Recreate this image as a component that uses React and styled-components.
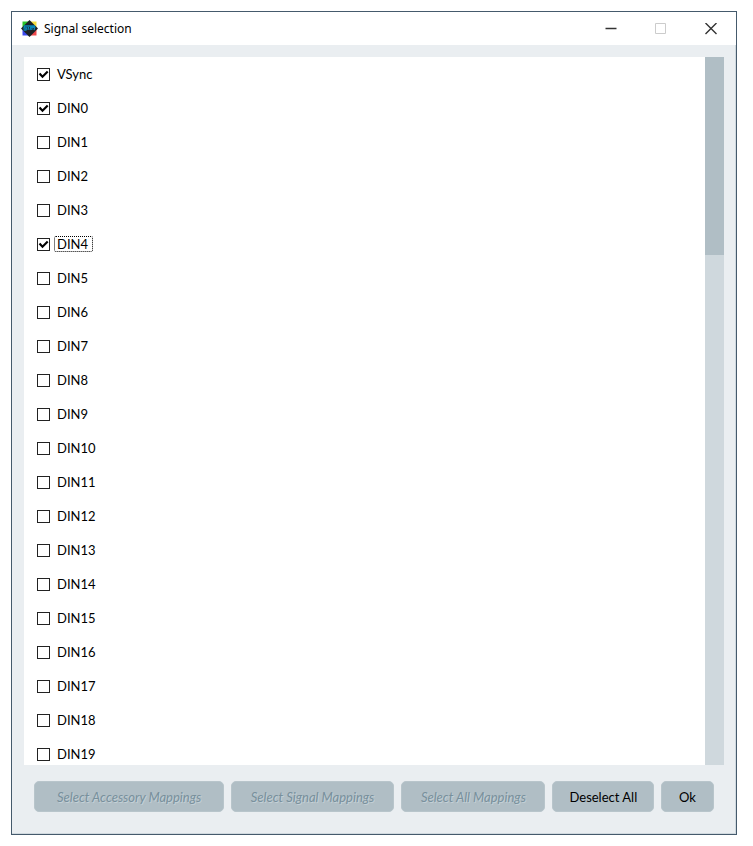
import React, { useState } from "react";
import styled, { createGlobalStyle } from "styled-components";

const GlobalStyle = createGlobalStyle`
    *, *::before, *::after {
        box-sizing: border-box;
    }

    body {
        margin: 0;
        background-color: #ffffff;
        font-family: Lato, "Liberation Sans", sans-serif;
        font-size: 13px;
        color: #000000;
    }
`;

const Desktop = styled.div`
    display: flex;
    height: 100vh;
    padding: 11px 16px 11px 11px;
`;

// Window frame
const Window = styled.div`
    flex: 1;
    min-width: 0;
    display: flex;
    flex-direction: column;
    border: 1px solid #455a6c;
    background-color: #eaeef1;
    box-shadow: inset -1px -1px 0 #d0d9df;
`;

const TitleBar = styled.header`
    display: flex;
    align-items: center;
    height: 33px;
    flex-shrink: 0;
    padding-left: 9px;
    background-color: #ffffff;
`;

const Title = styled.h1`
    flex: 1;
    margin: 0 0 0 6px;
    font-family: "Noto Sans", "Open Sans", sans-serif;
    font-size: 12px;
    font-weight: 400;
    line-height: 16px;
`;

const WindowButton = styled.button`
    display: flex;
    align-items: center;
    justify-content: center;
    width: 50px;
    height: 33px;
    padding: 0;
    border: none;
    background: none;
    color: ${(props) => (props.disabled ? "#cccccc" : "#333333")};
`;

// Signal list
const ListFrame = styled.main`
    flex: 1;
    min-height: 0;
    display: flex;
    margin: 12px 12px 0;
    background-color: #ffffff;
`;

const SignalList = styled.ul`
    flex: 1;
    margin: 0;
    padding: 0 0 0 13px;
    list-style: none;
    overflow-y: auto;
    scrollbar-width: none;
`;

const SignalRow = styled.li`
    display: flex;
    align-items: center;
    height: 34px;
`;

const SignalLabel = styled.label`
    display: flex;
    align-items: center;
    gap: 4px;
`;

const CheckBox = styled.input`
    appearance: none;
    width: 13px;
    height: 13px;
    margin: 0;
    border: 1px solid #222222;
    background: #ffffff;
    outline: none;

    &:checked {
        background: #ffffff
            url("data:image/svg+xml,%3Csvg xmlns='http://www.w3.org/2000/svg' viewBox='0 0 11 11'%3E%3Cpath d='M1.500 4.500l3 3.200L9.700 2.500' fill='none' stroke='black' stroke-width='2.200'/%3E%3C/svg%3E")
            center / 11px 11px no-repeat;
    }
`;

const SignalName = styled.span`
    padding: 0 4px 0 2px;
    border: 1px dotted ${(props) => (props.$focused ? "#000000" : "transparent")};
    border-radius: 2px;
    line-height: 14px;
`;

const ScrollTrack = styled.div`
    width: 19px;
    background-color: #cfd8dd;
`;

const ScrollThumb = styled.div`
    height: 28%;
    background-color: #b0bec5;
`;

// Bottom buttons
const ButtonBar = styled.footer`
    display: flex;
    justify-content: flex-end;
    gap: 7px;
    padding: 16px 22px 22px;
`;

const ActionButton = styled.button`
    min-width: 53px;
    height: 31px;
    padding: 0 ${(props) => props.$pad || 16}px;
    border: 1px solid #b8c5cb;
    border-radius: 5px;
    background-color: #b0bec5;
    font-family: inherit;
    font-size: 13px;
    white-space: nowrap;
    color: #000000;

    &:disabled {
        font-style: italic;
        color: #78909c;
        text-shadow: 1px 1px 0 #c4d0d6;
    }
`;

const AppIcon = () => (
    <svg width="17" height="17" viewBox="0 0 17 17" aria-hidden="true">
        <path d="M1.500 1.500h7v7h-7z" fill="#2bc42b" />
        <path d="M8.500 1.500h7v7h-7z" fill="#f7e040" />
        <path d="M1.500 8.500h7v7h-7z" fill="#3a48ee" />
        <path d="M8.500 8.500h7v7h-7z" fill="#f0484c" />
        <path d="M8.500 0L17 8.500 8.500 17 0 8.500z" fill="#1d2226" />
        <path
            d="M6 6H3.500L3 8h2.500L5 10H2.500M7.500 7L7 10M9 10l.6-2.700h1.600L10.700 10M11.500 7.300h2.300L13 10M5 6h9"
            fill="none"
            stroke="#0887b8"
            strokeWidth="1.300"
        />
    </svg>
);

const SIGNALS = ["VSync", ...Array.from({ length: 20 }, (_, i) => `DIN${i}`)];

const MAPPINGS = [
    { text: "Select Accessory Mappings", pad: 22 },
    { text: "Select Signal Mappings", pad: 19 },
    { text: "Select All Mappings", pad: 19 },
];

export default function App() {
    const [selected, setSelected] = useState(["VSync", "DIN0", "DIN4"]);
    const [focused, setFocused] = useState("DIN4");

    const toggleSignal = (name) => {
        setSelected((prev) => (prev.includes(name) ? prev.filter((s) => s !== name) : [...prev, name]));
    };

    return (
        <>
            <GlobalStyle />
            <Desktop>
                <Window>
                    <TitleBar>
                        <AppIcon />
                        <Title>Signal selection</Title>
                        <WindowButton aria-label="Minimize">
                            <svg width="12" height="12" viewBox="0 0 12 12">
                                <path d="M0.500 5.500h11" stroke="currentColor" strokeWidth="1.500" />
                            </svg>
                        </WindowButton>
                        <WindowButton aria-label="Maximize" disabled>
                            <svg width="12" height="12" viewBox="0 0 12 12">
                                <path d="M0.500 0.500h10v10h-10z" fill="none" stroke="currentColor" />
                            </svg>
                        </WindowButton>
                        <WindowButton aria-label="Close">
                            <svg width="12" height="12" viewBox="0 0 12 12">
                                <path d="M0.500 0l11 11M11.500 0l-11 11" stroke="currentColor" strokeWidth="1.400" />
                            </svg>
                        </WindowButton>
                    </TitleBar>

                    <ListFrame>
                        <SignalList>
                            {SIGNALS.map((name) => (
                                <SignalRow key={name}>
                                    <SignalLabel>
                                        <CheckBox
                                            type="checkbox"
                                            checked={selected.includes(name)}
                                            onChange={() => toggleSignal(name)}
                                            onFocus={() => setFocused(name)}
                                        />
                                        <SignalName $focused={focused === name}>{name}</SignalName>
                                    </SignalLabel>
                                </SignalRow>
                            ))}
                        </SignalList>
                        <ScrollTrack>
                            <ScrollThumb />
                        </ScrollTrack>
                    </ListFrame>

                    <ButtonBar>
                        {MAPPINGS.map(({ text, pad }) => (
                            <ActionButton key={text} $pad={pad} disabled>
                                {text}
                            </ActionButton>
                        ))}
                        <ActionButton onClick={() => setSelected([])}>Deselect All</ActionButton>
                        <ActionButton>Ok</ActionButton>
                    </ButtonBar>
                </Window>
            </Desktop>
        </>
    );
}
